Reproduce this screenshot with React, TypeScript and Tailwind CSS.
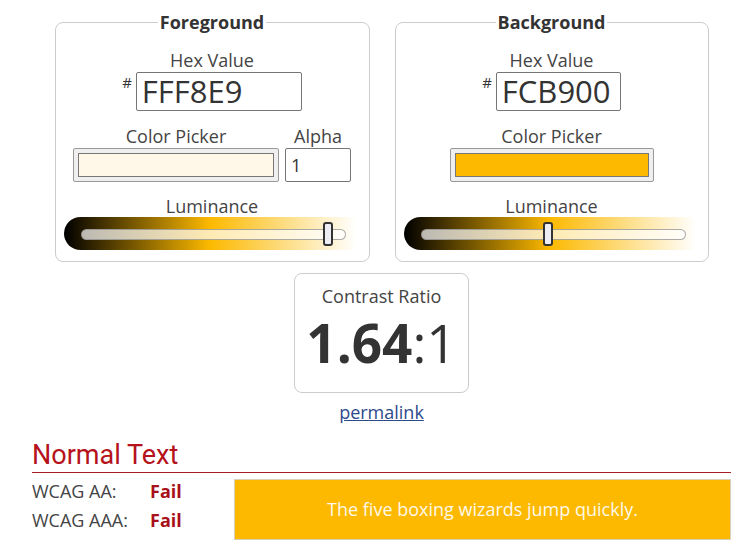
import React from "react"

const font = "font-['Open_Sans',sans-serif]"

function Slider({ pos }: { pos: number }) {
  return (
    <div className="relative ml-[8px] h-[33px] w-[292px] rounded-l-full bg-[linear-gradient(to_right,#000_0%,#fcb900_50%,#fff_100%)]">
      <div className="absolute left-[17px] right-[10px] top-[12px] h-[11px] rounded-full border border-[#888]/70 bg-white/70" />
      <div
        className="absolute top-[5px] h-[24px] w-[10px] rounded-[3px] border-2 border-[#333] bg-[#eceef3]"
        style={{ left: pos }}
      />
    </div>
  )
}

function Swatch({ color, width }: { color: string; width: number }) {
  return (
    <div
      className="h-[34px] rounded-[2px] border border-[#999] bg-[#efefef] px-[4px] py-[4px]"
      style={{ width }}>
      <div className="h-full w-full border border-[#777]" style={{ background: color }} />
    </div>
  )
}

function ColorSet({
  title,
  hex,
  color,
  hexWidth,
  alpha,
  thumb,
  width,
}: {
  title: string
  hex: string
  color: string
  hexWidth: number
  alpha?: boolean
  thumb: number
  width: number
}) {
  return (
    <fieldset className="rounded-lg border border-[#ccc] px-0 pb-[11px]" style={{ width }}>
      <legend className="mx-auto px-[2px] text-[18px] font-bold leading-[23px] text-[#333]">
        {title}
      </legend>
      <div className="mt-[15px] text-center text-[18px] leading-[22px] text-[#444]">Hex Value</div>
      <div className="mt-[1px] flex justify-center">
        <span className="mr-[4px] mt-[2px] text-[15px] leading-[16px] text-[#333]">#</span>
        <div
          className="h-[39px] rounded-[2px] border border-[#767676] pl-[5px] text-[31px] leading-[37px] text-[#333]"
          style={{ width: hexWidth }}>
          {hex}
        </div>
      </div>
      <div className="mt-[14px] flex justify-center gap-[6px]">
        <div className="flex flex-col items-center">
          <div className="text-[18px] leading-[22px] text-[#444]">Color Picker</div>
          <div className="mt-[1px]">
            <Swatch color={color} width={alpha ? 206 : 204} />
          </div>
        </div>
        {alpha && (
          <div className="flex flex-col items-center">
            <div className="text-[18px] leading-[22px] text-[#444]">Alpha</div>
            <div className="mt-[1px] h-[34px] w-[66px] rounded-[2px] border border-[#767676] pl-[5px] text-[18px] leading-[32px] text-[#333]">
              1
            </div>
          </div>
        )}
      </div>
      <div className="mt-[13px] text-center text-[18px] leading-[22px] text-[#444]">Luminance</div>
      <Slider pos={thumb} />
    </fieldset>
  )
}

export default function App() {
  return (
    <div className={`${font} ml-[32px] w-[699px] pt-[11px] text-[#333]`}>
      <div className="flex justify-center gap-[25px]">
        <ColorSet
          title="Foreground"
          hex="FFF8E9"
          color="#fff8e9"
          hexWidth={166}
          alpha
          thumb={259}
          width={315}
        />
        <ColorSet
          title="Background"
          hex="FCB900"
          color="#fcb900"
          hexWidth={125}
          thumb={139}
          width={314}
        />
      </div>

      <div className="mx-auto mt-[11px] h-[120px] w-[175px] rounded-lg border border-[#ccc] pt-[11px] text-center">
        <div className="text-[18px] leading-[22px] text-[#444]">Contrast Ratio</div>
        <div className="mt-[4px] text-[53px] leading-[64px] text-[#333]">
          <span className="font-bold">1.64</span>:1
        </div>
      </div>
      <div className="mt-[8px] text-center text-[18px] leading-[22px]">
        <a href="#" className="text-[#2e4a8b] underline">
          permalink
        </a>
      </div>

      <h2 className="mt-[17px] border-b border-[#a61c22] pb-[2px] font-['Roboto',sans-serif] text-[27px] leading-[30px] text-[#b5121b]">
        Normal Text
      </h2>
      <div className="flex items-start">
        <div className="mt-[4px] w-[202px] text-[18px] leading-[29px]">
          <div className="flex">
            <span className="w-[118px] text-[#444]">WCAG AA:</span>
            <span className="font-bold text-[#a8101a]">Fail</span>
          </div>
          <div className="flex">
            <span className="w-[118px] text-[#444]">WCAG AAA:</span>
            <span className="font-bold text-[#a8101a]">Fail</span>
          </div>
        </div>
        <div className="mt-[6px] flex h-[61px] flex-1 items-center justify-center border border-[#d8d0b8] bg-[#fcb900] text-[18px] text-[#fff8e9]">
          The five boxing wizards jump quickly.
        </div>
      </div>
    </div>
  )
}
